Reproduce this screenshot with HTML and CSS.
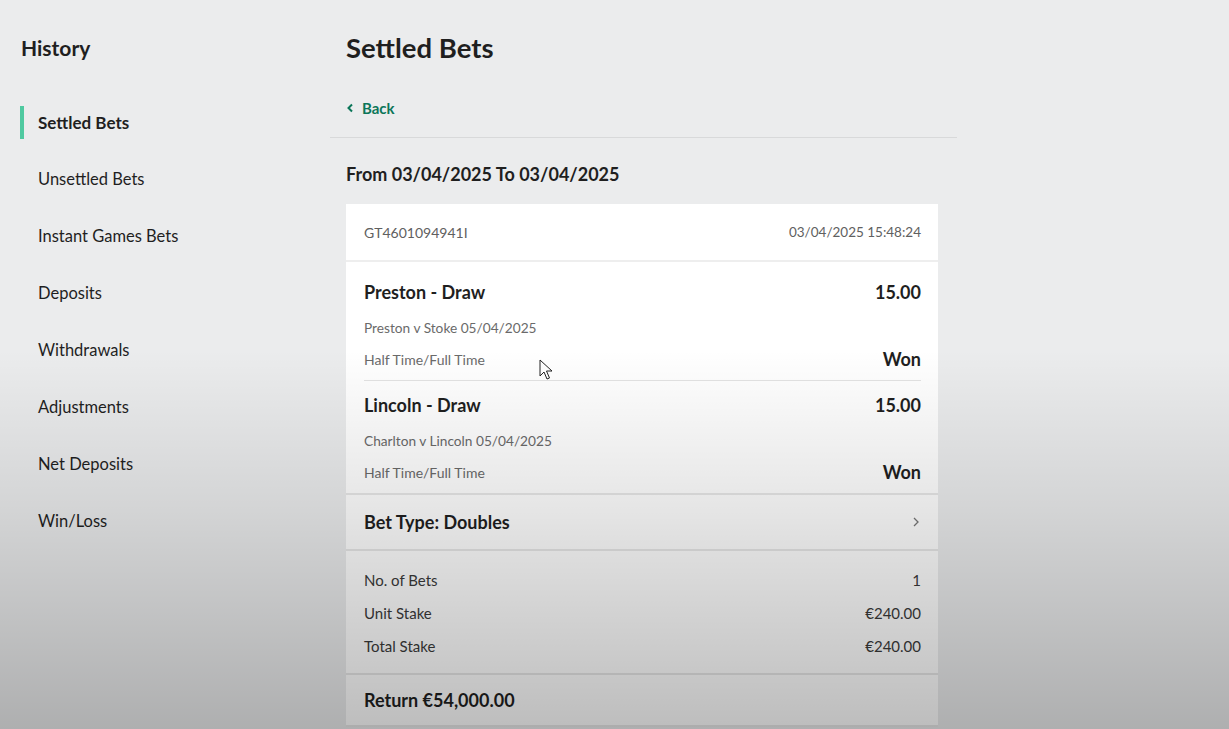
FILE: index.html
```html
<!DOCTYPE html>
<html lang="en">
<head>
<meta charset="utf-8">
<title>Settled Bets</title>
<link rel="stylesheet" href="styles.css">
</head>
<body>
<div class="page">
  <aside class="sidebar">
    <h2 class="side-title">History</h2>
    <nav class="side-nav">
      <a class="side-link active">Settled Bets</a>
      <a class="side-link">Unsettled Bets</a>
      <a class="side-link">Instant Games Bets</a>
      <a class="side-link">Deposits</a>
      <a class="side-link">Withdrawals</a>
      <a class="side-link">Adjustments</a>
      <a class="side-link">Net Deposits</a>
      <a class="side-link">Win/Loss</a>
    </nav>
  </aside>
  <main class="main">
    <h1 class="main-title">Settled Bets</h1>
    <div class="back-row">
      <a class="back-link"><svg class="back-icon" viewBox="0 0 8 10" width="8" height="10"><path d="M6 1.5 L2.5 5 L6 8.5" fill="none" stroke="currentColor" stroke-width="2"/></svg>Back</a>
    </div>
    <div class="content">
      <h3 class="range">From 03/04/2025 To 03/04/2025</h3>
      <section class="card">
        <div class="card-head">
          <span>GT4601094941I</span>
          <span>03/04/2025 15:48:24</span>
        </div>
        <div class="selections">
          <div class="sel">
            <div class="sel-row"><span class="sel-name">Preston - Draw</span><span class="sel-odds">15.00</span></div>
            <div class="sel-row"><span class="sel-sub">Preston v Stoke 05/04/2025</span></div>
            <div class="sel-row"><span class="sel-sub">Half Time/Full Time</span><span class="sel-result">Won</span></div>
          </div>
          <div class="sel">
            <div class="sel-row"><span class="sel-name">Lincoln - Draw</span><span class="sel-odds">15.00</span></div>
            <div class="sel-row"><span class="sel-sub">Charlton v Lincoln 05/04/2025</span></div>
            <div class="sel-row"><span class="sel-sub">Half Time/Full Time</span><span class="sel-result">Won</span></div>
          </div>
        </div>
        <div class="bet-type">
          <span>Bet Type: Doubles</span>
          <svg class="chev" viewBox="0 0 8 12" width="8" height="12"><path d="M2 2 L6 6 L2 10" fill="none" stroke="currentColor" stroke-width="1.3"/></svg>
        </div>
        <div class="details">
          <div class="det-row"><span>No. of Bets</span><span>1</span></div>
          <div class="det-row"><span>Unit Stake</span><span>€240.00</span></div>
          <div class="det-row"><span>Total Stake</span><span>€240.00</span></div>
        </div>
        <div class="return-row">Return €54,000.00</div>
      </section>
    </div>
  </main>
</div>
<svg class="cursor" viewBox="0 0 14 22" width="14" height="22"><path d="M1 1 L1 17 L5 13 L8 20 L10.5 19 L7.5 12 L13 12 Z" fill="#fff" stroke="#222" stroke-width="1"/></svg>
<div class="shade"></div>
</body>
</html>
```

FILE: styles.css
```css
* { box-sizing: border-box; }
html, body { margin: 0; padding: 0; }
body {
  background: #ebeced;
  font-family: "Lato", "Noto Sans", sans-serif;
  color: #1f1f1f;
  width: 1229px;
  height: 729px;
  overflow: hidden;
  position: relative;
}
.page {
  display: flex;
  align-items: flex-start;
}
.sidebar {
  width: 330px;
  padding: 35px 0 0 20px;
}
.side-title {
  margin: 0 0 0 1px;
  font-size: 21px;
  font-weight: 700;
  line-height: 26px;
}
.side-nav {
  display: flex;
  flex-direction: column;
  gap: 24px;
  margin-top: 45px;
}
.side-link {
  display: block;
  height: 33px;
  padding: 0 0 0 14px;
  line-height: 33px;
  font-size: 16.5px;
  color: #1f1f1f;
  border-left: 4px solid transparent;
}
.side-link.active {
  border-left-color: #4fc9a0;
  font-weight: 700;
  font-size: 17px;
}
.main {
  width: 627px;
  padding-top: 32px;
}
.main-title {
  margin: 0 0 0 16px;
  font-size: 27.5px;
  line-height: 32px;
  font-weight: 700;
}
.back-row {
  padding: 33px 0 19px 16px;
  border-bottom: 1px solid #d8d9da;
}
.back-link {
  display: inline-flex;
  align-items: center;
  gap: 8px;
  color: #0b7659;
  font-weight: 700;
  font-size: 15px;
  line-height: 20px;
}
.back-icon { display: block; }
.content {
  padding: 24px 0 0 16px;
  width: 608px;
}
.range {
  margin: 0;
  font-size: 18px;
  line-height: 24px;
  font-weight: 700;
}
.card {
  margin-top: 18px;
  background: #fff;
  width: 592px;
}
.card-head {
  height: 58px;
  display: flex;
  align-items: center;
  justify-content: space-between;
  padding: 0 17px 0 18px;
  font-size: 14px;
  color: #606060;
  border-bottom: 2px solid #eeeeee;
}
.card-head span:last-child { font-size: 13.5px; }
.selections { padding: 0 17px 0 18px; }
.sel {
  padding: 17px 0 5px;
  border-bottom: 1px solid #e3e3e3;
}
.sel:last-child { border-bottom: none; }
.sel + .sel { padding-top: 11px; }
.sel-row {
  display: flex;
  justify-content: space-between;
  align-items: center;
  height: 32px;
}
.sel-row:first-child { height: 26px; margin-bottom: 6px; }
.sel-name, .sel-odds, .sel-result {
  font-size: 18px;
  font-weight: 700;
}
.sel-sub {
  font-size: 14px;
  color: #6a6a6a;
}
.sel-row:nth-child(2) .sel-sub { font-size: 13.7px; }
.bet-type {
  display: flex;
  justify-content: space-between;
  align-items: center;
  height: 56px;
  padding: 0 18px;
  font-size: 18px;
  font-weight: 700;
  border-top: 2px solid #e8e8e8;
}
.chev { color: #777; }
.details {
  padding: 12px 17px 11px 18px;
  border-top: 2px solid #e8e8e8;
}
.det-row {
  display: flex;
  justify-content: space-between;
  align-items: center;
  height: 33px;
  font-size: 15px;
  color: #3a3a3a;
}
.return-row {
  height: 54px;
  display: flex;
  align-items: center;
  padding: 0 18px;
  font-size: 18px;
  font-weight: 700;
  border-top: 2px solid #e8e8e8;
  border-bottom: 2px solid #e8e8e8;
}
.cursor {
  position: absolute;
  left: 539px;
  top: 359px;
}
.shade {
  position: absolute;
  inset: 0;
  pointer-events: none;
  background: linear-gradient(to bottom, rgba(0,0,0,0) 0%, rgba(0,0,0,0) 48%, rgba(0,0,0,0.1) 70%, rgba(0,0,0,0.26) 100%);
}
```
